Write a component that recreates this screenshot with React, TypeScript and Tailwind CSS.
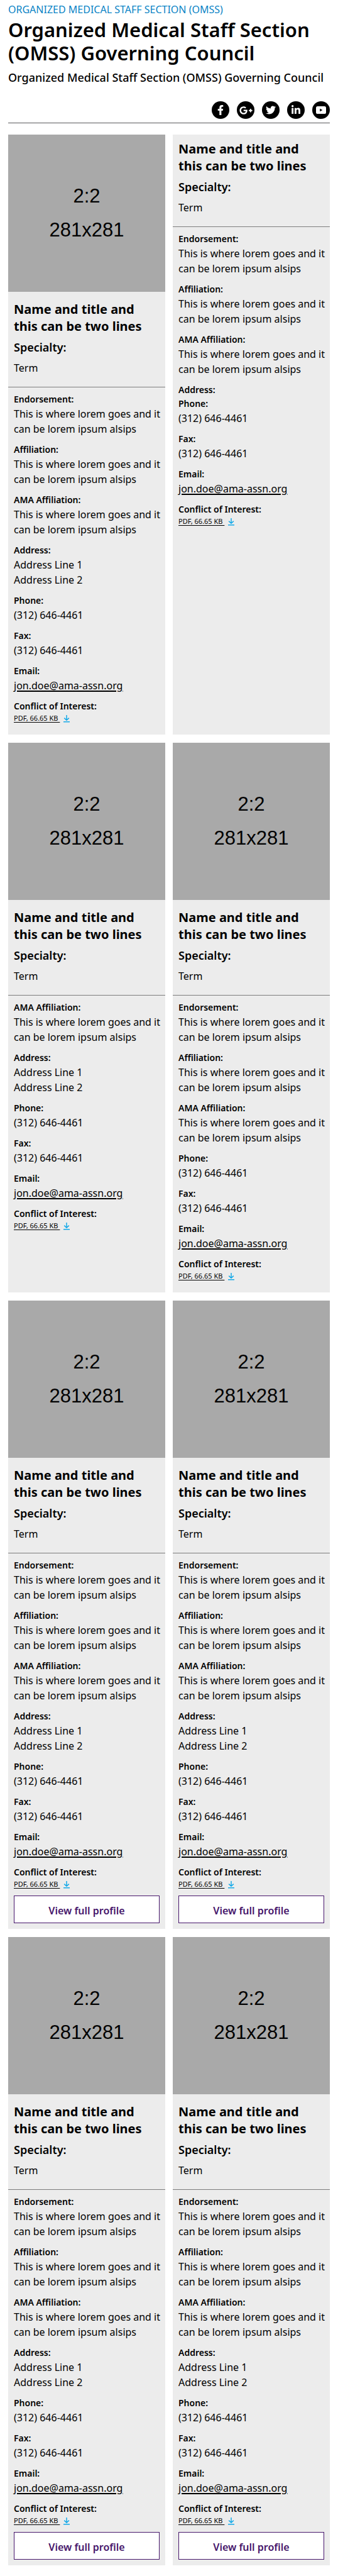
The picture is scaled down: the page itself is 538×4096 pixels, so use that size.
import type { ReactNode } from "react";
import { FaFacebookF, FaGooglePlusG, FaLinkedinIn, FaTwitter } from "react-icons/fa";

type Section = "endorsement" | "affiliation" | "ama" | "address";

type Member = {
  photo: boolean;
  sections: Section[];
  address: string[];
  profile: boolean;
};

const ALL: Section[] = ["endorsement", "affiliation", "ama", "address"];
const ADDRESS = ["Address Line 1", "Address Line 2"];
const LOREM = "This is where lorem goes and it can be lorem ipsum alsips";

const members: Member[] = [
  { photo: true, sections: ALL, address: ADDRESS, profile: false },
  { photo: false, sections: ALL, address: [], profile: false },
  { photo: true, sections: ["ama", "address"], address: ADDRESS, profile: false },
  { photo: true, sections: ["endorsement", "affiliation", "ama"], address: [], profile: false },
  { photo: true, sections: ALL, address: ADDRESS, profile: true },
  { photo: true, sections: ALL, address: ADDRESS, profile: true },
  { photo: true, sections: ALL, address: ADDRESS, profile: true },
  { photo: true, sections: ALL, address: ADDRESS, profile: true },
];

function YoutubeGlyph() {
  return (
    <svg viewBox="0 0 16 12" className="h-3 w-4" aria-hidden="true">
      <rect x="0" y="0" width="16" height="12" rx="2.6" fill="#fff" />
      <path d="M6.2 3.8 10.4 6 6.2 8.2z" fill="#000" />
    </svg>
  );
}

function DownloadGlyph() {
  return (
    <svg viewBox="0 0 10 12" className="mt-[3px] h-3 w-[10px]" fill="none" stroke="#14a9e8" strokeWidth="1.5" aria-hidden="true">
      <path d="M5 0v8M1.2 4.6 5 8.2l3.8-3.6M0 10.8h10" />
    </svg>
  );
}

const socials: { name: string; icon: ReactNode }[] = [
  { name: "Facebook", icon: <FaFacebookF className="size-4" /> },
  { name: "Google Plus", icon: <FaGooglePlusG className="size-[21px]" /> },
  { name: "Twitter", icon: <FaTwitter className="size-4" /> },
  { name: "LinkedIn", icon: <FaLinkedinIn className="size-4" /> },
  { name: "YouTube", icon: <YoutubeGlyph /> },
];

function Field({ label, children }: { label: string; children?: ReactNode }) {
  return (
    <div>
      <dt className="text-[14px] leading-[22px] font-semibold">{label}</dt>
      {children && <dd className="mb-[10px] text-base leading-6">{children}</dd>}
    </div>
  );
}

function MemberCard({ member }: { member: Member }) {
  const has = (section: Section) => member.sections.includes(section);
  return (
    <article className="bg-[#ececec]">
      {member.photo && (
        <div className="flex aspect-square flex-col items-center justify-center bg-[#a9a9a9] font-['Liberation_Sans',sans-serif] text-[31px] leading-[54px]">
          <span>2:2</span>
          <span>281x281</span>
        </div>
      )}
      <header className={member.photo ? "border-b border-[#7d7d7d] px-[9px] pt-[14px] pb-[18px]" : "border-b border-[#7d7d7d] px-[9px] pt-[9px] pb-[18px]"}>
        <h3 className="text-xl leading-[27px] font-bold">
          Name and title and
          <br />
          this can be two lines
        </h3>
        <p className="mt-2 text-lg leading-6 font-semibold">Specialty:</p>
        <p className="mt-[9px] text-base leading-6">Term</p>
      </header>
      <dl className="pt-2 pr-1 pl-[9px]">
        {has("endorsement") && <Field label="Endorsement:">{LOREM}</Field>}
        {has("affiliation") && <Field label="Affiliation:">{LOREM}</Field>}
        {has("ama") && <Field label="AMA Affiliation:">{LOREM}</Field>}
        {has("address") && (
          <Field label="Address:">
            {member.address.length > 0 && member.address.map((line) => <span key={line} className="block">{line}</span>)}
          </Field>
        )}
        <Field label="Phone:">(312) 646-4461</Field>
        <Field label="Fax:">(312) 646-4461</Field>
        <Field label="Email:">
          <a href="mailto:jon.doe@ama-assn.org" className="underline decoration-2 underline-offset-2">
            jon.doe@ama-assn.org
          </a>
        </Field>
        <div>
          <dt className="text-[14px] leading-[22px] font-semibold">Conflict of Interest:</dt>
          <dd>
            <a href="#conflict" className="flex h-4 w-fit gap-[6px] text-[11px] leading-4">
              <span className="whitespace-pre underline decoration-1 underline-offset-2">{"PDF, 66.65 KB "}</span>
              <DownloadGlyph />
            </a>
          </dd>
        </div>
      </dl>
      {member.profile ? (
        <div className="px-[9px] pt-[10px] pb-[9px]">
          <button type="button" className="h-11 w-full border border-[#46166b] bg-white pt-1 text-base font-semibold text-[#46166b]">
            View full profile
          </button>
        </div>
      ) : (
        <div className="h-[18px]" />
      )}
    </article>
  );
}

export default function App() {
  return (
    <main className="bg-white px-[13px] pt-[3px] pb-[17px] font-['Noto_Sans',sans-serif] text-black">
      <p className="text-base leading-6 text-[#0a84c6]">ORGANIZED MEDICAL STAFF SECTION (OMSS)</p>
      <h1 className="mt-[2px] text-[31px] leading-[37px] font-semibold">Organized Medical Staff Section (OMSS) Governing Council</h1>
      <h2 className="mt-2 text-lg leading-6 font-medium">Organized Medical Staff Section (OMSS) Governing Council</h2>
      <nav aria-label="Share" className="mt-[26px] flex justify-end gap-3 border-b border-[#58595b] pb-[6px]">
        {socials.map((s) => (
          <a key={s.name} href="#share" aria-label={s.name} className="flex size-7 items-center justify-center rounded-full bg-black text-white">
            {s.icon}
          </a>
        ))}
      </nav>
      <section className="mt-[18px] grid grid-cols-2 gap-x-3 gap-y-[13px]">
        {members.map((m, i) => (
          <MemberCard key={i} member={m} />
        ))}
      </section>
    </main>
  );
}
